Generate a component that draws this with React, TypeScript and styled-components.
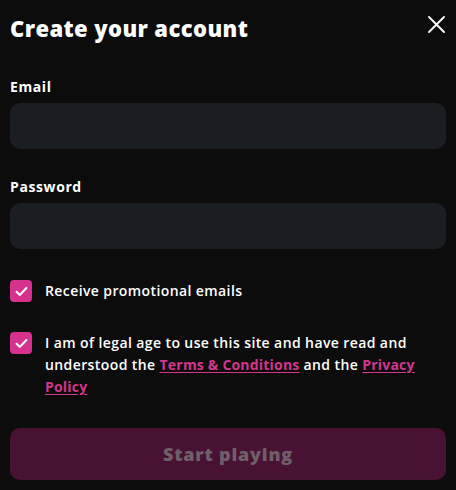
import styled, { createGlobalStyle } from 'styled-components';

const GlobalStyle = createGlobalStyle`
  html, body {
    margin: 0;
    padding: 0;
    background: #0c0c0d;
  }
  body {
    font-family: "Open Sans", "Noto Sans", sans-serif;
    color: #ffffff;
  }
`;

const Modal = styled.div`
  width: 456px;
  height: 490px;
  box-sizing: border-box;
  padding: 12px 10px 10px;
  background: #0c0c0d;
  display: flex;
  flex-direction: column;
`;

const Header = styled.div`
  display: flex;
  align-items: flex-start;
  justify-content: space-between;
`;

const Title = styled.h1`
  margin: 0;
  font-family: "Open Sans", sans-serif;
  font-weight: 800;
  font-size: 22px;
  line-height: 32px;
  letter-spacing: 0.4px;
  color: #ffffff;
`;

const CloseButton = styled.button`
  width: 24px;
  height: 24px;
  margin: 0 -2px 0 0;
  padding: 0;
  border: none;
  background: transparent;
  display: flex;
  align-items: center;
  justify-content: center;
  cursor: pointer;
`;

const Field = styled.div<{ $top: number }>`
  margin-top: ${p => p.$top}px;
  display: flex;
  flex-direction: column;
  gap: 6px;
`;

const Label = styled.label`
  font-weight: 700;
  font-size: 14px;
  line-height: 20px;
  letter-spacing: 0.6px;
  color: #ffffff;
`;

const Input = styled.input`
  height: 46px;
  box-sizing: border-box;
  border: none;
  border-radius: 10px;
  background: #1a1d22;
  padding: 0 16px;
  color: #fff;
  font-size: 14px;
  outline: none;
`;

const CheckRow = styled.label<{ $top: number }>`
  margin-top: ${p => p.$top}px;
  display: flex;
  align-items: flex-start;
  gap: 13px;
  cursor: pointer;
`;

const Box = styled.span`
  flex: none;
  width: 22px;
  height: 22px;
  border-radius: 4px;
  background: #d5318d;
  display: flex;
  align-items: center;
  justify-content: center;
`;

const CheckText = styled.span`
  font-weight: 600;
  font-size: 14px;
  line-height: 22px;
  letter-spacing: 0.4px;
  color: #ffffff;
  padding-right: 14px;
`;

const Link = styled.a`
  color: #d3358e;
  font-weight: 700;
  letter-spacing: 0.2px;
  text-decoration: underline;
  text-underline-offset: 2px;
`;

const Submit = styled.button`
  margin-top: 30px;
  height: 52px;
  border: none;
  border-radius: 10px;
  background: #4a1232;
  color: #6f5f69;
  font-family: "Open Sans", sans-serif;
  font-weight: 800;
  font-size: 18px;
  letter-spacing: 0.8px;
  cursor: not-allowed;
`;

function Check() {
  return (
    <svg width="13" height="11" viewBox="0 0 13 11" fill="none">
      <path d="M1.6 5.8 L4.9 8.9 L11.4 2" stroke="#fff" strokeWidth="2.1" strokeLinecap="round" strokeLinejoin="round" />
    </svg>
  );
}

export default function App() {
  return (
    <>
      <GlobalStyle />
      <Modal>
        <Header>
          <Title>Create your account</Title>
          <CloseButton aria-label="Close">
            <svg width="17" height="17" viewBox="0 0 17 17">
              <path d="M1 1 L16 16 M16 1 L1 16" stroke="#fff" strokeWidth="1.8" strokeLinecap="round" />
            </svg>
          </CloseButton>
        </Header>

        <Field $top={33}>
          <Label>Email</Label>
          <Input type="email" />
        </Field>

        <Field $top={28}>
          <Label>Password</Label>
          <Input type="password" />
        </Field>

        <CheckRow $top={31}>
          <Box><Check /></Box>
          <CheckText>Receive promotional emails</CheckText>
        </CheckRow>

        <CheckRow $top={30}>
          <Box><Check /></Box>
          <CheckText>
            I am of legal age to use this site and have read and understood the{' '}
            <Link href="#">Terms &amp; Conditions</Link> and the <Link href="#">Privacy Policy</Link>
          </CheckText>
        </CheckRow>

        <Submit disabled>Start playing</Submit>
      </Modal>
    </>
  );
}
